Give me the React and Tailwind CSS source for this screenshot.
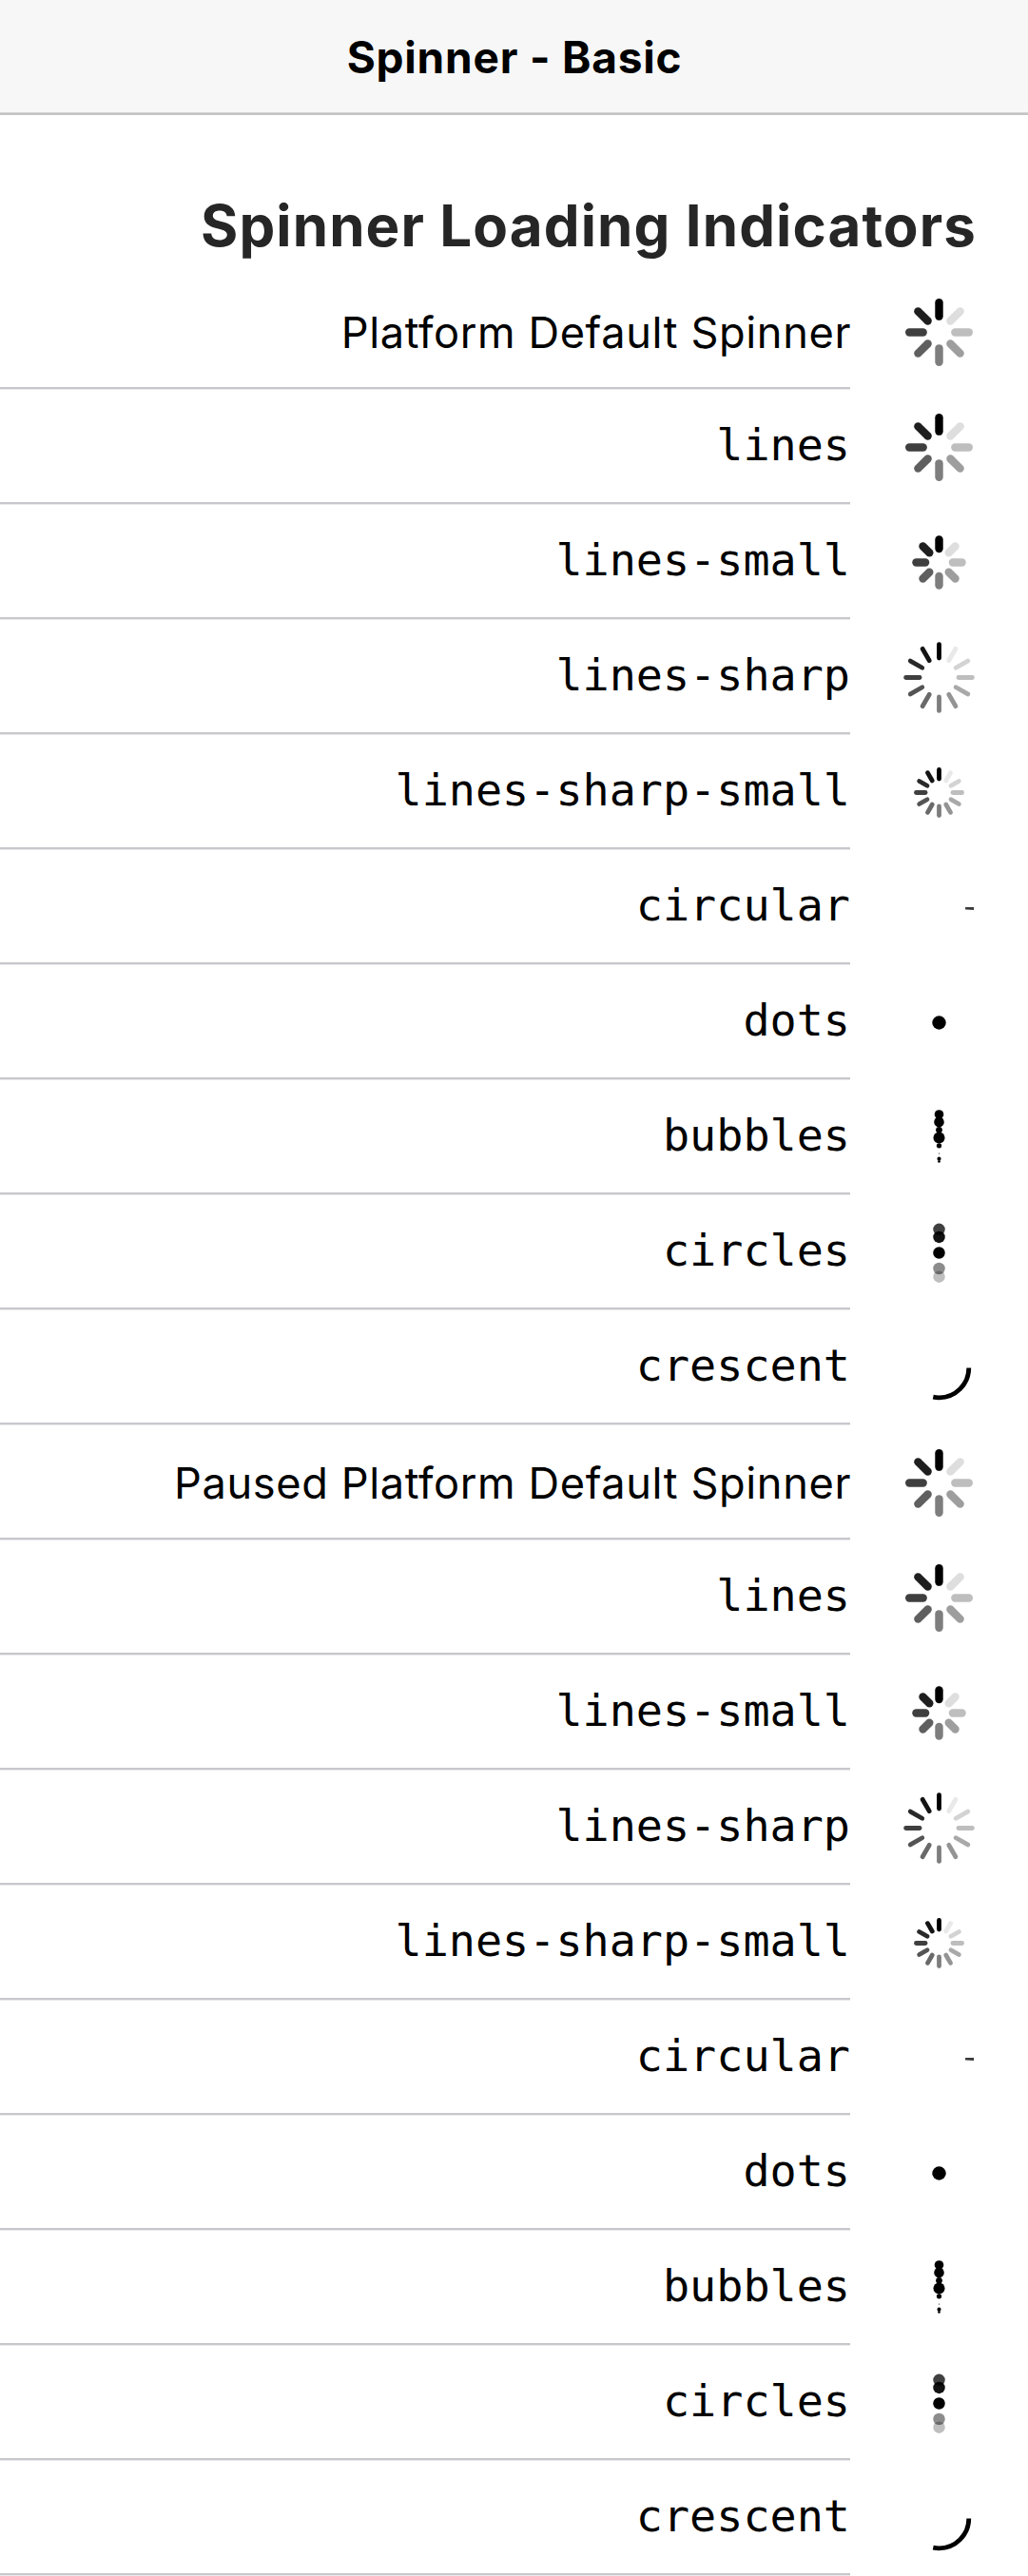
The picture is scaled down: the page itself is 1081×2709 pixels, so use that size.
const bars = (count, inner, outer, width) => (
  <g stroke="#000" strokeLinecap="round" strokeWidth={width}>
    {Array.from({ length: count }, (_, i) => (
      <line
        key={i}
        y1={-inner}
        y2={-outer}
        transform={`rotate(${(360 / count) * i})`}
        opacity={i === 0 ? 1 : i / count}
      />
    ))}
  </g>
);

const beads = (list) =>
  list.map(([y, r, opacity = 1]) => <circle key={y} cy={y} r={r} opacity={opacity} />);

const shapes = {
  lines: bars(8, 14, 26, 7),
  'lines-small': bars(8, 12, 20, 7),
  'lines-sharp': bars(12, 17, 29, 4),
  'lines-sharp-small': bars(12, 12, 20, 4),
  circular: <path d="M22.9 -0.4H30.4V2L22.9 1.6Z" fill="#3a3a3a" />,
  dots: <circle r="6" />,
  bubbles: beads([[-20.4, 4], [-13.8, 4.4], [-6.8, 2.8], [0, 5], [6.9, 2.2], [13.7, 0.5], [18.4, 1.7], [20.8, 1.1]]),
  circles: beads([[-20.5, 5.2, 0.75], [-13.8, 5.2, 0.93], [0, 5.2], [13.7, 5.2, 0.45], [20.9, 5.2, 0.25]]),
  crescent: (
    <circle r="26" fill="none" stroke="#000" strokeWidth="4" strokeDasharray="46 200" />
  ),
};

const names = Object.keys(shapes);

function Row({ label, shape, mono }) {
  return (
    <li className="flex h-[121px]">
      <div className="flex flex-1 flex-col">
        <div className="flex flex-1 items-center justify-end">
          <span
            className={
              mono
                ? "mb-[2px] whitespace-nowrap font-['DejaVu_Sans_Mono',monospace] text-[46.75px] leading-[54px]"
                : "mt-[3px] -mr-px whitespace-nowrap font-['Inter',sans-serif] text-[45.2px] leading-[54px] tracking-[0.6px]"
            }
          >
            {label}
          </span>
        </div>
        <div className="h-[3px] border-b border-[#e9e9eb] bg-[#c8c7cc]" />
      </div>
      <div className="flex w-[187px] items-center pl-[54.75px]">
        <svg className="size-[77px]" viewBox="-32 -32 64 64" aria-hidden="true">
          {shapes[shape]}
        </svg>
      </div>
    </li>
  );
}

function Group({ title }) {
  return (
    <ul>
      <Row label={title} shape="lines" />
      {names.map((name) => (
        <Row key={name} label={name} shape={name} mono />
      ))}
    </ul>
  );
}

export default function App() {
  return (
    <div className="h-[2709px] w-[1081px] overflow-hidden bg-white font-['Inter',sans-serif] text-black">
      <header className="flex h-[121px] flex-col bg-[#f7f7f7]">
        <h1 className="flex flex-1 items-center justify-center pt-[2px] pl-px text-[46px] leading-[56px] font-bold tracking-[0.8px]">
          Spinner - Basic
        </h1>
        <div className="h-[3px] border-t border-[#d4d4d4] bg-[#c4c4c4]" />
      </header>
      <main>
        <div className="flex h-[168px] items-end justify-end pr-[54px] pb-[16px]">
          <h2 className="text-[60px] leading-[72px] font-bold tracking-[1.1px] text-[#262626]">
            Spinner Loading Indicators
          </h2>
        </div>
        <Group title="Platform Default Spinner" />
        <Group title="Paused Platform Default Spinner" />
      </main>
    </div>
  );
}
